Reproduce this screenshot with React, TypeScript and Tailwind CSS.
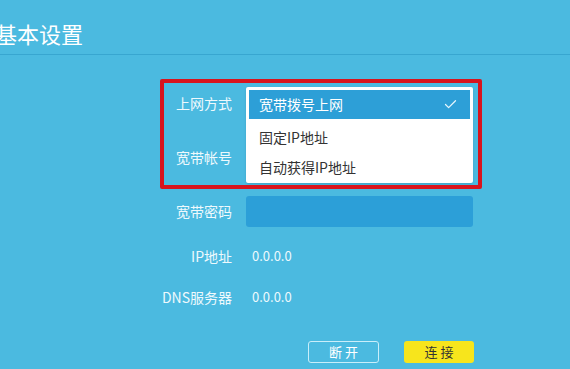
import { Check } from "lucide-react";

const labelCls = "w-[82px] shrink-0 text-right text-[14px] text-[#eef9fd]";

const options = ["固定IP地址", "自动获得IP地址"];

export default function App() {
    return (
        <div className="relative w-[570px] h-[369px] overflow-hidden bg-[#4bbae0] font-['Noto_Sans_CJK_SC',sans-serif]">
            {/* header */}
            <div className="h-[55px] border-b border-[#38a6d0]">
                <h1 className="-ml-[5px] pt-[21px] text-[22px] leading-[24px] text-white">基本设置</h1>
            </div>

            {/* form */}
            <div className="ml-[150px] flex flex-col">
                <div className="mt-[32px] flex h-[32px] items-center gap-[14px]">
                    <span className={labelCls}>上网方式</span>
                    <div className="relative h-[32px] w-[227px]">
                        <div className="absolute left-0 top-0 z-10 h-[96px] w-[227px] rounded-[2px] bg-white px-[3px] pt-[3px] shadow-sm">
                            <div className="flex h-[29px] items-center justify-between bg-[#2d9fd7] pl-[10px] pr-[12px] text-[14px] text-white">
                                <span>宽带拨号上网</span>
                                <Check size={15} strokeWidth={2} className="text-[#e6f6fd]" />
                            </div>
                            <div className="mt-[3px]">
                                {options.map((o) => (
                                    <div key={o} className="flex h-[30px] items-center pl-[10px] text-[14px] text-[#333]">
                                        {o}
                                    </div>
                                ))}
                            </div>
                        </div>
                    </div>
                </div>

                <div className="mt-[22px] flex h-[32px] items-center gap-[14px]">
                    <span className={labelCls}>宽带帐号</span>
                    <div className="h-[31px] w-[227px] rounded-[3px] bg-[#2c9fd8]" />
                </div>

                <div className="mt-[23px] flex h-[31px] items-center gap-[14px]">
                    <span className={labelCls}>宽带密码</span>
                    <div className="h-[31px] w-[227px] rounded-[3px] bg-[#2c9fd8]" />
                </div>

                <div className="mt-[13px] flex h-[32px] items-center gap-[14px]">
                    <span className={labelCls}>IP地址</span>
                    <span className="pl-[6px] text-[13px] text-[#eef9fd]">0.0.0.0</span>
                </div>

                <div className="mt-[9px] flex h-[32px] items-center gap-[14px]">
                    <span className={labelCls}>DNS服务器</span>
                    <span className="pl-[6px] text-[13px] text-[#eef9fd]">0.0.0.0</span>
                </div>

                <div className="mt-[28px] flex items-center gap-[25px] pl-[158px]">
                    <button className="flex h-[22px] w-[71px] items-center justify-center rounded-[3px] border-[1.5px] border-[#c9eefa] text-[13px] text-white">
                        断 开
                    </button>
                    <button className="flex h-[22px] w-[70px] items-center justify-center rounded-[3px] bg-[#f7e51c] text-[13px] text-[#333]">
                        连 接
                    </button>
                </div>
            </div>

            {/* annotation */}
            <div className="pointer-events-none absolute left-[160px] top-[79px] z-20 h-[110px] w-[322px] rounded-[2px] border-[4px] border-[#d8141d]" />
        </div>
    );
}
